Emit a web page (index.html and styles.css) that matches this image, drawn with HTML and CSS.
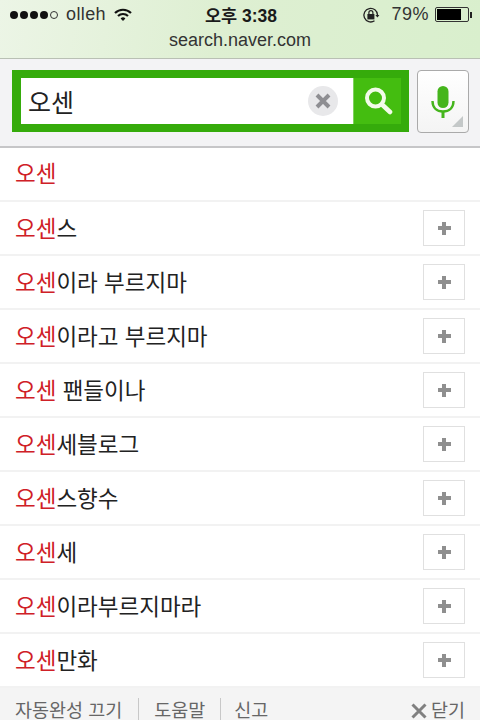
FILE: index.html
```html
<!DOCTYPE html>
<html lang="ko">
<head>
  <meta charset="UTF-8" />
  <meta name="viewport" content="width=device-width, initial-scale=1.0" />
  <title>search.naver.com</title>
  <link rel="stylesheet" href="styles.css">
</head>
<body>
  <div class="page">
    <!-- Status bar and address -->
    <header class="top">
      <div class="status">
        <div class="status-left">
          <span class="signal"><i></i><i></i><i></i><i></i><i class="off"></i></span>
          <span class="carrier">olleh</span>
          <svg class="wifi" width="18" height="14" viewBox="0 0 18 14">
            <path d="M1 5 A11.5 11.5 0 0 1 17 5" fill="none" stroke="#111" stroke-width="2.2"/>
            <path d="M4 8 A7.2 7.2 0 0 1 14 8" fill="none" stroke="#111" stroke-width="2.2"/>
            <path d="M6.6 10.4 A3.4 3.4 0 0 1 11.4 10.4 L9 13 Z" fill="#111"/>
          </svg>
        </div>
        <div class="clock">오후 3:38</div>
        <div class="status-right">
          <svg class="lock" width="18" height="18" viewBox="0 0 18 18">
            <path d="M15.5 9 A6.8 6.8 0 1 0 12.5 14.8" fill="none" stroke="#222" stroke-width="1.3"/>
            <path d="M13.4 9 L17.4 9 L15.4 11.4 Z" fill="#222"/>
            <rect x="5.4" y="8" width="7" height="5.4" fill="#222"/>
            <path d="M6.9 8 V6.6 A2 2 0 0 1 10.9 6.6 V8" fill="none" stroke="#222" stroke-width="1.2"/>
          </svg>
          <span class="percent">79%</span>
          <span class="battery"><span class="battery-fill"></span></span>
          <span class="battery-tip"></span>
        </div>
      </div>
      <div class="url">search.naver.com</div>
    </header>

    <!-- Search form -->
    <section class="search">
      <form class="search-box">
        <div class="search-input">
          <span class="query">오센</span>
          <span class="clear">
            <svg width="16" height="16" viewBox="0 0 16 16">
              <path d="M2 2 L14 14 M14 2 L2 14" stroke="#8e8e92" stroke-width="4"/>
            </svg>
          </span>
        </div>
        <button class="search-btn" type="button">
          <svg width="30" height="30" viewBox="0 0 30 30">
            <circle cx="12.5" cy="12" r="8.5" fill="none" stroke="#f2fbe9" stroke-width="4"/>
            <path d="M19 18.5 L27 26" stroke="#f2fbe9" stroke-width="4.6" stroke-linecap="round"/>
          </svg>
        </button>
      </form>
      <button class="mic-btn" type="button">
        <svg width="24" height="32" viewBox="0 0 24 32">
          <rect x="6.5" y="0" width="11" height="22" rx="5.5" fill="#45b51c"/>
          <path d="M1.5 15 C1.5 22 6 25.5 12 25.5 C18 25.5 22.5 22 22.5 15" fill="none" stroke="#45b51c" stroke-width="2.4"/>
          <rect x="10.5" y="25" width="3" height="7" fill="#45b51c"/>
        </svg>
        <span class="mic-corner"></span>
      </button>
    </section>

    <!-- Suggestions -->
    <ul class="list">
      <li class="row first"><span class="term"><em>오센</em></span></li>
      <li class="row"><span class="term"><em>오센</em>스</span><span class="add"></span></li>
      <li class="row"><span class="term"><em>오센</em>이라 부르지마</span><span class="add"></span></li>
      <li class="row"><span class="term"><em>오센</em>이라고 부르지마</span><span class="add"></span></li>
      <li class="row"><span class="term"><em>오센</em> 팬들이나</span><span class="add"></span></li>
      <li class="row"><span class="term"><em>오센</em>세블로그</span><span class="add"></span></li>
      <li class="row"><span class="term"><em>오센</em>스향수</span><span class="add"></span></li>
      <li class="row"><span class="term"><em>오센</em>세</span><span class="add"></span></li>
      <li class="row"><span class="term"><em>오센</em>이라부르지마라</span><span class="add"></span></li>
      <li class="row"><span class="term"><em>오센</em>만화</span><span class="add"></span></li>
    </ul>

    <!-- Footer links -->
    <footer class="foot">
      <a class="foot-link">자동완성 끄기</a>
      <a class="foot-link">도움말</a>
      <a class="foot-link">신고</a>
      <a class="foot-close">
        <svg width="16" height="16" viewBox="0 0 16 16">
          <path d="M1.5 1.5 L14.5 14.5 M14.5 1.5 L1.5 14.5" stroke="#808080" stroke-width="3"/>
        </svg>
        닫기
      </a>
    </footer>
  </div>
</body>
</html>
```

FILE: styles.css
```css
/* Basic page */
html, body {
  margin: 0;
  padding: 0;
  background: #fff;
}
body {
  font-family: "Liberation Sans", "Noto Sans CJK KR", sans-serif;
  color: #111;
}
.page {
  width: 480px;
  height: 720px;
  overflow: hidden;
  display: flex;
  flex-direction: column;
}

/* Status bar */
.top {
  height: 59px;
  box-sizing: border-box;
  flex: none;
  background: linear-gradient(100deg, #ecf5e6 0%, #deefd2 45%, #d9efcd 100%);
  border-bottom: 1px solid #b9c0b4;
}
.status {
  height: 29px;
  display: grid;
  grid-template-columns: 1fr auto 1fr;
  align-items: center;
  padding: 0 8px 0 10px;
}
.status-left {
  display: flex;
  align-items: center;
}
.signal {
  display: flex;
  gap: 2px;
  margin-right: 8px;
}
.signal i {
  width: 8px;
  height: 8px;
  border-radius: 50%;
  background: #111;
}
.signal i.off {
  box-sizing: border-box;
  background: none;
  border: 1px solid #333;
}
.carrier {
  font-size: 18px;
  color: #333;
  margin-right: 8px;
  letter-spacing: 0.4px;
}
.clock {
  font-size: 17.5px;
  font-weight: bold;
  color: #1a1a1a;
}
.status-right {
  display: flex;
  align-items: center;
  justify-content: flex-end;
}
.lock {
  margin-right: 11px;
}
.percent {
  font-size: 18px;
  color: #333;
  margin-right: 6px;
  letter-spacing: 0.5px;
}
.battery {
  box-sizing: border-box;
  width: 34px;
  height: 15px;
  border: 1px solid #333;
  border-radius: 2px;
  padding: 1px;
  display: block;
}
.battery-fill {
  display: block;
  width: 79%;
  height: 100%;
  background: #000;
}
.battery-tip {
  width: 2px;
  height: 6px;
  margin-left: 1px;
  background: #222;
}
.url {
  text-align: center;
  font-size: 18px;
  line-height: 22px;
  color: #333;
}

/* Search area */
.search {
  height: 89px;
  box-sizing: border-box;
  flex: none;
  display: flex;
  gap: 8px;
  padding: 11px 11px 0 12px;
  background: #f3f3f5;
  border-bottom: 2px solid #c6c6c8;
}
.search-box {
  box-sizing: border-box;
  width: 397px;
  height: 62px;
  margin: 0;
  padding: 8px 8px 8px 9px;
  display: flex;
  background: #35ab0b;
}
.search-input {
  flex: 1;
  display: flex;
  align-items: center;
  justify-content: space-between;
  padding: 0 15px 0 7px;
  background: #fff;
}
.query {
  font-size: 25px;
  color: #222;
}
.clear {
  width: 30px;
  height: 30px;
  border-radius: 50%;
  background: #e8e8ea;
  display: flex;
  align-items: center;
  justify-content: center;
}
.search-btn {
  width: 48px;
  padding: 0;
  border: none;
  background: #44bd10;
  border-left: 1px solid #7ed35c;
  display: flex;
  align-items: center;
  justify-content: center;
}
.mic-btn {
  position: relative;
  box-sizing: border-box;
  width: 52px;
  height: 63px;
  padding: 0;
  border: 1px solid #aaa;
  border-radius: 4px;
  background: linear-gradient(#fff, #f4f4f4);
  display: flex;
  align-items: center;
  justify-content: center;
}
.mic-corner {
  position: absolute;
  right: 5px;
  bottom: 5px;
  border-style: solid;
  border-width: 0 0 11px 11px;
  border-color: transparent transparent #c4c8c8 transparent;
}

/* Suggestion rows */
.list {
  flex: none;
  margin: 0;
  padding: 0;
  list-style: none;
}
.row {
  box-sizing: border-box;
  height: 54px;
  padding: 0 15px;
  display: flex;
  align-items: center;
  justify-content: space-between;
  border-bottom: 2px solid #f2f2f2;
  font-size: 22.5px;
  color: #222;
}
.row.first {
  padding-bottom: 2px;
}
.term {
  padding-bottom: 3px;
}
.term em {
  font-style: normal;
  color: #cf2027;
}
.add {
  box-sizing: border-box;
  width: 42px;
  height: 36px;
  border: 1px solid #e0e0e0;
  display: flex;
  align-items: center;
  justify-content: center;
}
/* plus sign drawn from a horizontal bar and a vertical gradient */
.add::before {
  content: "";
  width: 13px;
  height: 13px;
  background:
    linear-gradient(#8f8f8f, #8f8f8f) center / 13px 4px no-repeat,
    linear-gradient(#8f8f8f, #8f8f8f) center / 4px 13px no-repeat;
}

/* Footer */
.foot {
  flex: 1;
  display: flex;
  align-items: flex-start;
  padding: 10px 15px 0;
  background: #f4f4f4;
  box-shadow: inset 0 -2px 0 #a8a8a8;
  font-size: 18.5px;
  line-height: 26px;
  color: #666;
}
.foot-link {
  padding-right: 16px;
  margin-right: 15px;
  border-right: 1px solid #c8c8c8;
}
.foot-link:nth-child(2) {
  padding-right: 15px;
  margin-right: 13px;
}
.foot-link:nth-child(3) {
  padding-right: 0;
  margin-right: 0;
  border-right: none;
}
.foot-close {
  margin-left: auto;
  display: flex;
  align-items: center;
  gap: 4px;
}
```
